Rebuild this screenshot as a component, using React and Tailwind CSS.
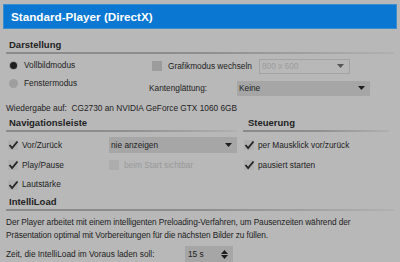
import React from "react";

function Arrow({ className = "" }) {
  return (
    <svg width="7" height="4" viewBox="0 0 7 4" className={className}>
      <path d="M0 0h7L3.5 4z" fill="currentColor" />
    </svg>
  );
}

function Check({ checked, disabled }) {
  return (
    <span
      className={`relative inline-block w-[10px] h-[10px] ${
        disabled ? "bg-[#adadad]" : checked ? "bg-[#b0b0b0]" : "bg-[#9c9c9c]"
      }`}
    >
      {checked && (
        <svg width="11" height="10" viewBox="0 0 11 10" className="absolute left-0 top-0">
          <path d="M1.5 5l2.6 3L9.5 1.5" fill="none" stroke="#262626" strokeWidth="1.9" />
        </svg>
      )}
    </span>
  );
}

function Radio({ selected }) {
  return (
    <span className="inline-flex items-center justify-center w-[9px] h-[9px] rounded-full bg-[#9e9e9e]">
      {selected && <span className="w-[7px] h-[7px] rounded-full bg-[#1e1e1e]" />}
    </span>
  );
}

function Header({ children, className = "" }) {
  return (
    <div className={className}>
      <div className="h-[12px] leading-[12px] pl-[3px] font-bold text-[9.5px] text-[#222]">{children}</div>
      <div className="mt-[1px] h-[2px] bg-gradient-to-r from-[#8a8a8a] via-[#8e8e8e] to-[#b0b0b0]" />
    </div>
  );
}

export default function App() {
  return (
    <div
      className="w-[400px] h-[262px] overflow-hidden bg-[#b8b8b8] text-[8.3px] text-[#222]"
      style={{ fontFamily: '"Liberation Sans", Arial, sans-serif' }}
    >
      {/* Title */}
      <div className="mx-[3px] mt-[4px] h-[25px] bg-[#0a78d2] border border-[#3d8ccc] flex items-center pl-[7px] text-white font-bold text-[11.7px]">
        Standard-Player (DirectX)
      </div>

      <div className="px-[6px]">
        {/* Darstellung */}
        <Header className="mt-[10px]">Darstellung</Header>
        <div className="flex">
          <div className="w-[143px] pt-[2px]">
            <div className="h-[18px] flex items-center gap-[6px] pl-[3px]">
              <Radio selected />
              <span>Vollbildmodus</span>
            </div>
            <div className="h-[18px] flex items-center gap-[6px] pl-[3px]">
              <Radio />
              <span>Fenstermodus</span>
            </div>
          </div>
          <div className="pt-[4px]">
            <div className="h-[16px] flex items-center">
              <div className="w-[110px] flex items-center gap-[6px] pl-[3px]">
                <Check />
                <span>Grafikmodus wechseln</span>
              </div>
              <div className="w-[91px] h-[15px] border border-[#a3a3a3] flex items-center justify-between pl-[2px] pr-[5px] text-[#9c9c9c]">
                <span>800 x 600</span>
                <Arrow className="text-[#555]" />
              </div>
            </div>
            <div className="mt-[6px] h-[16px] flex items-center">
              <span className="w-[88px]">Kantenglättung:</span>
              <div className="w-[133px] h-[15px] bg-[#a6a6a6] flex items-center justify-between pl-[2px] pr-[5px]">
                <span>Keine</span>
                <Arrow className="text-[#1e1e1e]" />
              </div>
            </div>
          </div>
        </div>

        <div className="mt-[6px] h-[12px] leading-[12px]">
          Wiedergabe auf:&nbsp;&nbsp;CG2730 an NVIDIA GeForce GTX 1060 6GB
        </div>

        {/* Navigationsleiste / Steuerung */}
        <div className="mt-[3px] flex gap-[6px]">
          <div className="w-[231px]">
            <Header>Navigationsleiste</Header>
            <div className="mt-[3px]">
              <div className="h-[20px] flex items-center">
                <div className="w-[103px] flex items-center gap-[4px] pl-[2px]">
                  <Check checked />
                  <span>Vor/Zurück</span>
                </div>
                <div className="w-[128px] h-[16px] bg-[#a6a6a6] flex items-center justify-between pl-[2px] pr-[5px]">
                  <span>nie anzeigen</span>
                  <Arrow className="text-[#1e1e1e]" />
                </div>
              </div>
              <div className="h-[20px] flex items-center">
                <div className="w-[103px] flex items-center gap-[4px] pl-[2px]">
                  <Check checked />
                  <span>Play/Pause</span>
                </div>
                <div className="flex items-center gap-[5px] text-[#999]">
                  <Check disabled />
                  <span>beim Start sichtbar</span>
                </div>
              </div>
              <div className="h-[19px] flex items-center gap-[4px] pl-[2px]">
                <Check checked />
                <span>Lautstärke</span>
              </div>
            </div>
          </div>
          <div className="w-[146px]">
            <Header className="[&>div:first-child]:pl-[5px]">Steuerung</Header>
            <div className="mt-[3px]">
              <div className="h-[20px] flex items-center gap-[4px] pl-[1px]">
                <Check checked />
                <span>per Mausklick vor/zurück</span>
              </div>
              <div className="h-[20px] flex items-center gap-[4px] pl-[1px]">
                <Check checked />
                <span>pausiert starten</span>
              </div>
            </div>
          </div>
        </div>

        {/* IntelliLoad */}
        <Header className="mt-[2px]">IntelliLoad</Header>
        <p className="mt-[5px] leading-[13px] tracking-[-0.08px]">
          Der Player arbeitet mit einem intelligenten Preloading-Verfahren, um Pausenzeiten während der
          <br />
          Präsentation optimal mit Vorbereitungen für die nächsten Bilder zu füllen.
        </p>
        <div className="mt-[4px] h-[16px] flex items-center">
          <span className="w-[179px]">Zeit, die IntelliLoad im Voraus laden soll:</span>
          <div className="w-[48px] h-[16px] bg-[#a6a6a6] flex items-center justify-between pl-[3px] pr-[5px]">
            <span>15 s</span>
            <span className="flex flex-col gap-[1px] text-[#1e1e1e]">
              <Arrow className="rotate-180" />
              <Arrow />
            </span>
          </div>
        </div>
      </div>
    </div>
  );
}
